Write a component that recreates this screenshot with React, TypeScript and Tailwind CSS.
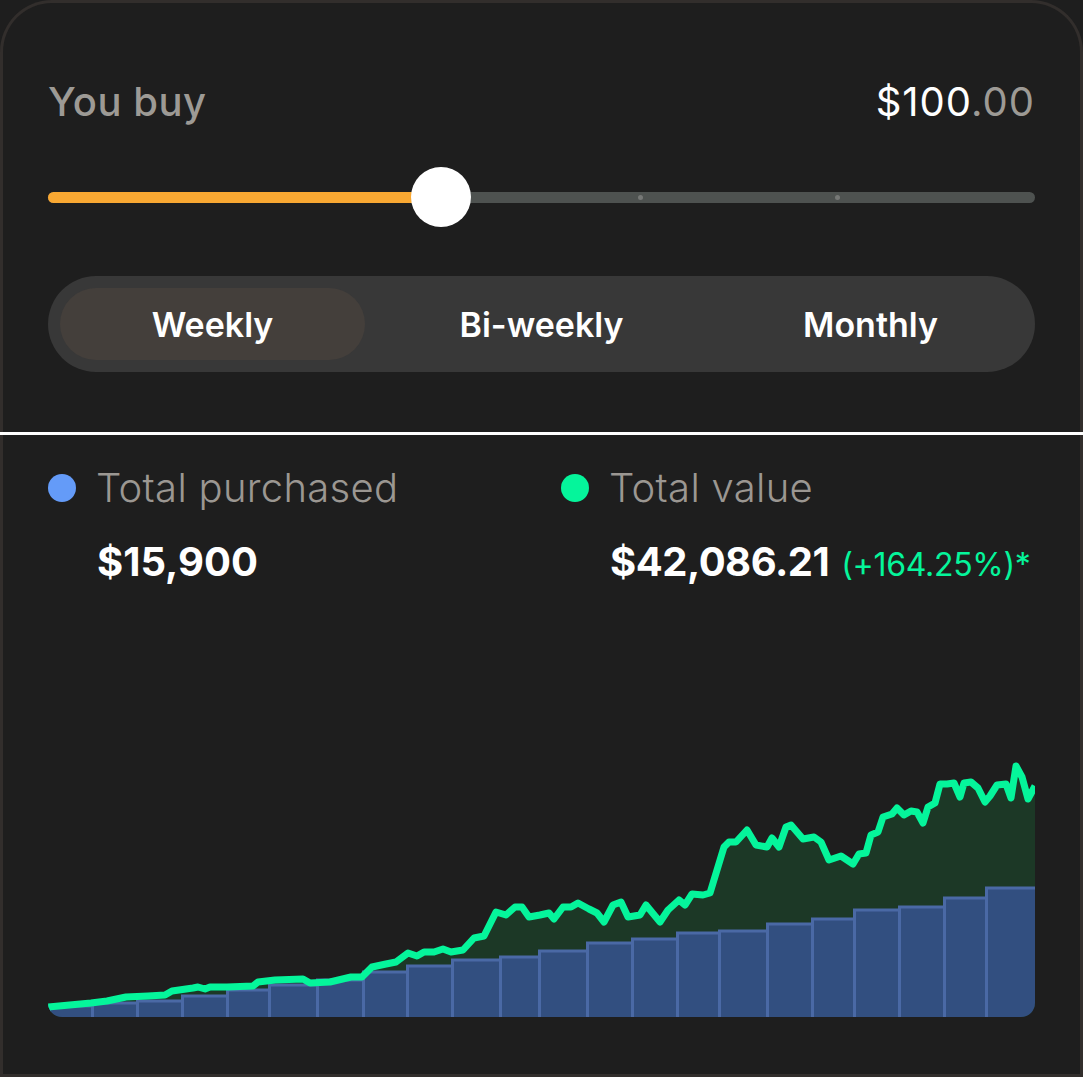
import { type ReactNode } from 'react';

// ---- Chart data (page coordinates, drawn through a matching viewBox) -------

const BAR_EDGES = [48, 91, 136, 181, 226, 268, 316, 362, 406, 451, 499, 538, 586, 631, 676, 718, 766, 811, 853, 898, 943, 985, 1035];
const BAR_TOPS = [1006, 1003, 1001, 996, 990, 985, 980, 972, 966, 960, 957, 951, 943, 939, 933, 931, 924, 919, 910, 907, 898, 888];

const LINE: [number, number][] = [
  [48, 1007], [91, 1003], [107, 1001], [126, 997], [148, 996], [165, 995], [172, 991], [193, 988],
  [198, 987], [205, 989], [210, 987], [227, 987], [253, 986], [258, 982], [275, 980], [303, 979],
  [310, 983], [330, 982], [351, 977], [362, 977], [372, 967], [386, 964], [396, 962], [408, 953],
  [417, 956], [424, 952], [434, 952], [443, 949], [451, 952], [463, 950], [474, 938], [484, 936],
  [496, 912], [506, 915], [515, 907], [522, 907], [529, 917], [540, 915], [549, 913], [554, 919],
  [563, 907], [571, 907], [578, 903], [589, 909], [597, 913], [604, 922], [613, 905], [621, 902],
  [628, 917], [640, 915], [646, 905], [660, 922], [668, 910], [679, 900], [685, 905], [692, 894],
  [703, 895], [710, 893], [717, 870], [724, 847], [729, 842], [736, 842], [747, 830], [756, 845],
  [767, 847], [772, 838], [779, 847], [786, 827], [791, 825], [803, 839], [814, 837], [821, 842],
  [829, 860], [841, 856], [853, 864], [859, 854], [866, 853], [871, 835], [878, 832], [883, 817],
  [892, 814], [897, 808], [904, 815], [911, 811], [917, 812], [923, 823], [928, 807], [935, 803],
  [940, 784], [947, 784], [954, 783], [960, 797], [964, 783], [971, 782], [978, 788], [985, 802],
  [990, 796], [997, 785], [1006, 784], [1011, 798], [1016, 766], [1022, 777], [1028, 799], [1035, 786],
];

const BASE = 1030;

function linePath(): string {
  return LINE.map(([x, y], i) => `${i === 0 ? 'M' : 'L'}${x} ${y}`).join(' ');
}

function areaPath(): string {
  return `${linePath()} L1035 ${BASE} L48 ${BASE} Z`;
}

// ---- Pieces ----------------------------------------------------------------

function Slider() {
  return (
    <div className="relative flex h-[60px] items-center">
      <div className="relative h-[11px] w-full rounded-full bg-[#4e5250]">
        <div className="absolute left-0 top-0 h-full w-[393px] rounded-full bg-[#f9a832]" />
        <div className="absolute left-[590px] top-[3px] h-[5px] w-[5px] rounded-full bg-[#767876]" />
        <div className="absolute left-[787px] top-[3px] h-[5px] w-[5px] rounded-full bg-[#767876]" />
      </div>
      <div className="absolute left-[363px] top-0 h-[60px] w-[60px] rounded-full bg-white" />
    </div>
  );
}

function Segment({ children, active }: { children: ReactNode; active?: boolean }) {
  return (
    <div
      className={
        'flex h-[72px] items-center justify-center rounded-full text-[34px] font-semibold text-white ' +
        (active ? 'bg-[#443f3b]' : '')
      }
    >
      {children}
    </div>
  );
}

function Legend({ dot, label, children }: { dot: string; label: string; children: ReactNode }) {
  return (
    <div className="flex flex-col">
      <div className="flex items-center gap-[20px]">
        <span className={'h-[28px] w-[28px] rounded-full ' + dot} />
        <span className="text-[40px] font-light leading-[48px] tracking-[0.3px] text-[#9b9792]">{label}</span>
      </div>
      <div className="mt-[26px] flex h-[48px] items-baseline gap-[12px] overflow-visible pl-[49px] leading-[48px]">
        {children}
      </div>
    </div>
  );
}

function Chart() {
  return (
    <div className="overflow-hidden rounded-b-[14px]">
      <svg width={987} height={431} viewBox="48 586 987 431" className="block">
        <path d={areaPath()} fill="#1c3826" />
        {BAR_TOPS.map((top, i) => (
          <rect
            key={i}
            x={BAR_EDGES[i] + 1.5}
            y={top}
            width={BAR_EDGES[i + 1] - BAR_EDGES[i]}
            height={BASE - top}
            fill="#324f80"
            stroke="#4a69a5"
            strokeWidth={3}
          />
        ))}
        <path d={linePath()} fill="none" stroke="#05f59b" strokeWidth={7} strokeLinejoin="round" />
      </svg>
    </div>
  );
}

// ---- Page ------------------------------------------------------------------

export default function App() {
  return (
    <div className="h-[1077px] w-[1083px] bg-[#1e1e1e] font-['Inter','Noto_Sans',sans-serif]">
      <section className="h-[432px] rounded-t-[52px] border-[3px] border-b-0 border-[#322e2c] px-[45px] pt-[75px]">
        <div className="flex items-start justify-between leading-[48px]">
          <span className="text-[40px] font-medium tracking-[0.5px] text-[#9d9a95]">You buy</span>
          <span className="text-[40px] font-normal tracking-[1px] text-white">
            $100<span className="text-[#9d9a95]">.00</span>
          </span>
        </div>
        <div className="mt-[41px]">
          <Slider />
        </div>
        <div className="mt-[49px] grid h-[96px] grid-cols-3 gap-6 rounded-full bg-[#383838] p-3">
          <Segment active>Weekly</Segment>
          <Segment>Bi-weekly</Segment>
          <Segment>Monthly</Segment>
        </div>
      </section>

      <div className="h-[3px] bg-white" />

      <section className="h-[642px] border-[3px] border-t-0 border-[#322e2c] px-[45px] pt-[29px]">
        <div className="grid h-[122px] grid-cols-[474px_474px] gap-[39px]">
          <Legend dot="bg-[#649bf8]" label="Total purchased">
            <span className="text-[40px] font-bold text-white">$15,900</span>
          </Legend>
          <Legend dot="bg-[#05f59b]" label="Total value">
            <span className="text-[40px] font-bold tracking-[-0.5px] text-white">$42,086.21</span>
            <span className="text-[32px] font-normal tracking-[-0.3px] text-[#05f59b]">(+164.25%)*</span>
          </Legend>
        </div>
        <Chart />
      </section>
    </div>
  );
}
